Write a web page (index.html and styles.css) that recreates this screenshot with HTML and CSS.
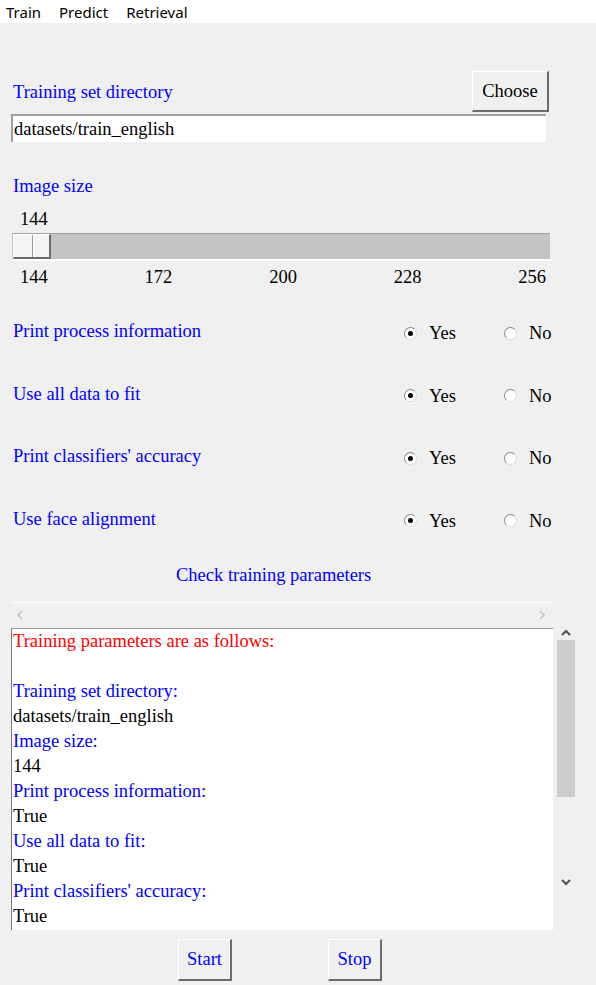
FILE: index.html
```html
<!DOCTYPE html>
<html>
<head>
<meta charset="utf-8">
<link rel="stylesheet" href="styles.css">
</head>
<body>
<div class="menubar">
  <span class="menu-item">Train</span>
  <span class="menu-item">Predict</span>
  <span class="menu-item">Retrieval</span>
</div>
<div class="main">
  <div class="dir-row">
    <span class="label">Training set directory</span>
    <div class="btn btn-choose">Choose</div>
  </div>
  <div class="entry">datasets/train_english</div>

  <div class="label section-label">Image size</div>
  <div class="slider-value">144</div>
  <div class="trough"><div class="thumb"></div></div>
  <div class="ticks">
    <span>144</span><span>172</span><span>200</span><span>228</span><span>256</span>
  </div>

  <div class="options">
    <div class="opt-row">
      <span class="label">Print process information</span>
      <span class="radio on"><span class="circle"></span>Yes</span>
      <span class="radio"><span class="circle"></span>No</span>
    </div>
    <div class="opt-row">
      <span class="label">Use all data to fit</span>
      <span class="radio on"><span class="circle"></span>Yes</span>
      <span class="radio"><span class="circle"></span>No</span>
    </div>
    <div class="opt-row">
      <span class="label">Print classifiers' accuracy</span>
      <span class="radio on"><span class="circle"></span>Yes</span>
      <span class="radio"><span class="circle"></span>No</span>
    </div>
    <div class="opt-row">
      <span class="label">Use face alignment</span>
      <span class="radio on"><span class="circle"></span>Yes</span>
      <span class="radio"><span class="circle"></span>No</span>
    </div>
  </div>

  <div class="check">Check training parameters</div>

  <div class="output">
    <div class="hscroll">
      <svg class="arr" width="8" height="10" viewBox="0 0 8 10"><path d="M6 1 L2 5 L6 9" fill="none" stroke="#c2c2c2" stroke-width="1.6"/></svg>
      <svg class="arr" width="8" height="10" viewBox="0 0 8 10"><path d="M2 1 L6 5 L2 9" fill="none" stroke="#c2c2c2" stroke-width="1.6"/></svg>
    </div>
    <div class="text-row">
      <div class="textarea">
        <div class="red">Training parameters are as follows:</div>
        <div>&nbsp;</div>
        <div class="blue">Training set directory:</div>
        <div>datasets/train_english</div>
        <div class="blue">Image size:</div>
        <div>144</div>
        <div class="blue">Print process information:</div>
        <div>True</div>
        <div class="blue">Use all data to fit:</div>
        <div>True</div>
        <div class="blue">Print classifiers' accuracy:</div>
        <div>True</div>
      </div>
      <div class="vscroll">
        <svg class="varr" width="12" height="8" viewBox="0 0 12 8"><path d="M2 6 L6 2 L10 6" fill="none" stroke="#505050" stroke-width="2"/></svg>
        <div class="vthumb"></div>
        <div class="vspace"></div>
        <svg class="varr" width="12" height="8" viewBox="0 0 12 8"><path d="M2 2 L6 6 L10 2" fill="none" stroke="#505050" stroke-width="2"/></svg>
      </div>
    </div>
  </div>

  <div class="actions">
    <div class="btn btn-act">Start</div>
    <div class="btn btn-act">Stop</div>
  </div>
</div>
</body>
</html>
```
FILE: styles.css
```css
html, body {
  margin: 0;
  padding: 0;
}
body {
  background: #f0f0f0;
  font-family: "Liberation Serif", "Times New Roman", serif;
  font-size: 18.5px;
  color: #000;
  width: 596px;
  height: 985px;
  overflow: hidden;
}
.menubar {
  height: 23px;
  background: #ffffff;
  display: flex;
  align-items: center;
  gap: 18px;
  padding-left: 6px;
  font-family: "Noto Sans", "Liberation Sans", sans-serif;
  font-size: 15px;
  color: #000;
}
.main {
  padding-left: 11px;
  width: 564px;
}
.label {
  color: #0000ff;
  line-height: 20px;
  padding-left: 2px;
}
.dir-row {
  margin-top: 48px;
  width: 538px;
  height: 41px;
  display: flex;
  justify-content: space-between;
  align-items: center;
}
.btn {
  box-sizing: border-box;
  background: #f0f0f0;
  border-style: solid;
  border-width: 1px 2px 2px 1px;
  border-color: #ffffff #6b6b6b #6b6b6b #ffffff;
  display: flex;
  align-items: center;
  justify-content: center;
}
.btn-choose {
  width: 77px;
  height: 41px;
}
.entry {
  margin-top: 2px;
  box-sizing: border-box;
  width: 535px;
  height: 28px;
  background: #fff;
  border-top: 2px solid #a0a0a0;
  border-left: 2px solid #a0a0a0;
  line-height: 26px;
  padding-left: 1px;
}
.section-label {
  margin-top: 34px;
}
.slider-value {
  margin-top: 13px;
  line-height: 20px;
  padding-left: 9px;
}
.trough {
  margin-top: 4px;
  margin-left: 1px;
  box-sizing: border-box;
  width: 538px;
  height: 28px;
  background: #c4c4c4;
  border-top: 1px solid #a0a0a0;
  border-bottom: 2px solid #ffffff;
  padding-left: 1px;
}
.thumb {
  box-sizing: border-box;
  width: 38px;
  height: 25px;
  background: linear-gradient(to right, transparent 18px, #9a9a9a 18px, #9a9a9a 19px, #ffffff 19px, #ffffff 20px, transparent 20px), #f4f4f4;
  border-style: solid;
  border-width: 1px 2px 2px 1px;
  border-color: #ffffff #6b6b6b #6b6b6b #ffffff;
}
.ticks {
  margin-top: 6px;
  margin-left: 9px;
  width: 526px;
  display: flex;
  justify-content: space-between;
  line-height: 20px;
}
.options {
  margin-top: 34px;
  display: flex;
  flex-direction: column;
  gap: 42.5px;
}
.opt-row {
  display: grid;
  grid-template-columns: 393px 100px auto;
  align-items: center;
  height: 20px;
}
.radio {
  display: flex;
  align-items: center;
  gap: 12px;
  line-height: 20px;
  position: relative;
  top: 2px;
}
.circle {
  box-sizing: border-box;
  width: 13px;
  height: 13px;
  border-radius: 50%;
  background: #fff;
  border: 1px solid;
  border-color: #8a8a8a #dcdcdc #dcdcdc #8a8a8a;
  display: flex;
  align-items: center;
  justify-content: center;
}
.radio.on .circle::after {
  content: "";
  width: 5px;
  height: 5px;
  border-radius: 50%;
  background: #000;
}
.check {
  margin-top: 36px;
  padding-left: 165px;
  color: #0000ff;
  line-height: 20px;
}
.output {
  margin-top: 17px;
  width: 564px;
}
.hscroll {
  box-sizing: border-box;
  width: 542px;
  height: 26px;
  border-top: 1px solid #ffffff;
  display: flex;
  justify-content: space-between;
  align-items: center;
  padding: 0 7px 0 5px;
}
.text-row {
  display: flex;
  align-items: flex-start;
}
.textarea {
  box-sizing: border-box;
  width: 542px;
  height: 302px;
  background: #fff;
  border-top: 1px solid #a0a0a0;
  border-left: 1px solid #7a7a7a;
  line-height: 25px;
  padding-left: 1px;
  overflow: hidden;
}
.red { color: #ff0000; }
.blue { color: #0000ff; }
.vscroll {
  margin-top: -5px;
  margin-left: 3px;
  width: 19px;
  height: 266px;
  display: flex;
  flex-direction: column;
  align-items: center;
}
.varr {
  flex: none;
  margin: 6px 0 3px;
}
.vthumb {
  width: 18px;
  height: 157px;
  background: #cdcdcd;
}
.vspace {
  flex: 1;
}
.actions {
  margin-top: 9px;
  display: flex;
  gap: 96px;
  padding-left: 167px;
}
.btn-act {
  width: 54px;
  height: 42px;
  color: #0000ff;
}
```
